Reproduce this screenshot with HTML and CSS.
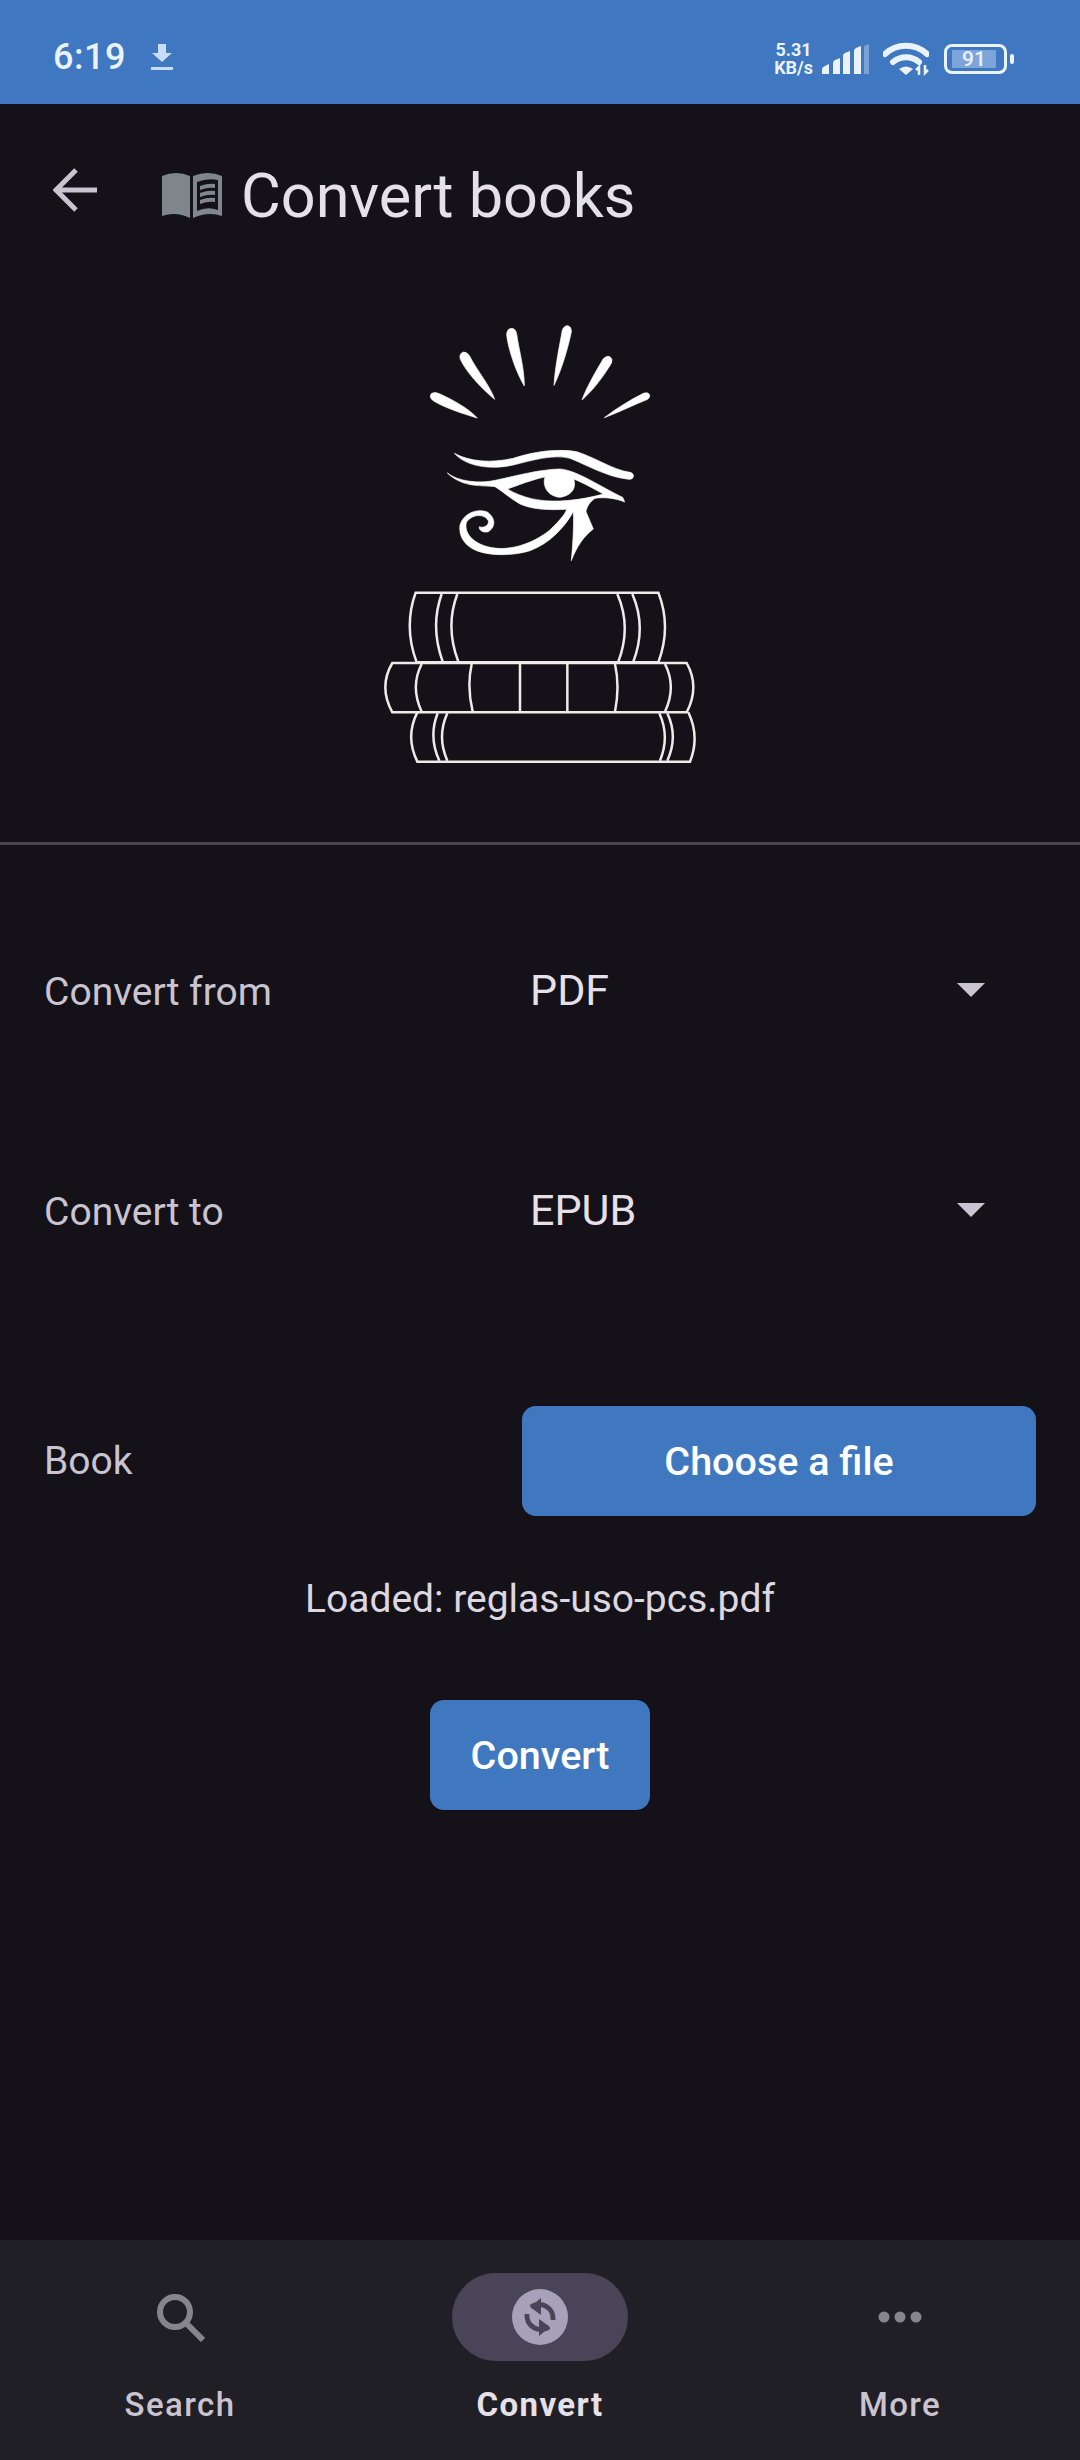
FILE: index.html
```html
<!DOCTYPE html>
<html lang="en">
<head>
    <meta charset="UTF-8">
    <meta name="viewport" content="width=device-width, initial-scale=1.0">
    <title>Convert books</title>
    <link rel="stylesheet" href="styles.css">
</head>
<body>
    <div class="app">
        <div class="status-bar">
            <div class="status-left">
                <span class="clock">6:19</span>
                <svg class="download" viewBox="0 0 22 26"><path d="M7 0h8v9h6L11 18 1 9h6zM0 23h22v3H0z"/></svg>
            </div>
            <div class="status-right">
                <span class="speed"><span>5.31</span><span>KB/s</span></span>
                <svg class="signal" viewBox="0 0 47 30">
                    <path d="M0 30v-4q0-3 3-4l4-2v10z"/>
                    <path d="M11 30V19q0-2 2-3l5-2v16z"/>
                    <path d="M21 30V12q0-2 2-3l5-2v23z"/>
                    <path d="M32 30V7q0-2 2-3l5-2v28z"/>
                    <path class="signal-off" d="M42 30V3q0-1 2-2l3-1v30z"/>
                </svg>
                <svg class="wifi" viewBox="0 0 46 34">
                    <path d="M2 12a31 31 0 0 1 42 0" />
                    <path d="M10 20a20 20 0 0 1 26 0" />
                    <path class="wifi-dot" d="M23 33l-7-6q7-5 14 0z"/>
                    <path class="wifi-arrows" d="M36 33v-8l-3 3M42 23v8l3-3"/>
                </svg>
                <div class="battery"><div class="battery-body"><span class="battery-fill">91</span></div><div class="battery-tip"></div></div>
            </div>
        </div>

        <div class="top-bar">
            <svg class="back" viewBox="0 0 44 44"><path d="M44 22H3M23 2L3 22l20 20"/></svg>
            <svg class="book" viewBox="0 0 60 46">
                <path d="M0 4Q14-2 28 4V46Q14 39 0 44z"/>
                <path fill-rule="evenodd" d="M31 4Q46-2 60 4V44Q46 39 31 46zM35 10V39Q45 34 56 38V8Q45 6 35 10z"/>
                <path d="M38 14q8-3 15-2v4q-7-1-15 2zM38 21q8-3 15-2v4q-7-1-15 2zM38 28q8-3 15-2v4q-7-1-15 2z"/>
            </svg>
            <h1>Convert books</h1>
        </div>

        <div class="logo-wrap">
            <svg class="logo" viewBox="0 0 1020 1410">
                <g class="eye" transform="translate(90 0)">
                    <path d="M232 324C190 312 120 288 97 270Q86 260 95 250Q105 245 118 251C160 270 205 295 232 324Z"/>
                    <path d="M284 268C250 240 200 190 181 148Q176 130 191 126Q202 126 210 140C230 180 272 230 284 268Z"/>
                    <path d="M373 228C350 190 325 120 320 75Q320 56 335 55Q347 56 350 72C355 110 374 180 373 228Z"/>
                    <path d="M462 226C465 170 480 100 487 60Q492 47 503 47Q515 50 514 66C505 110 485 180 462 226Z"/>
                    <path d="M546 270C560 230 590 180 610 146Q620 135 630 140Q640 148 634 160C610 200 580 240 546 270Z"/>
                    <path d="M613 323C650 295 690 270 730 250Q745 245 749 255Q750 266 738 270C700 285 650 310 613 323Z"/>
                    <path d="M163 430C210 455 270 460 340 445C400 425 470 415 530 425C580 440 640 480 690 487Q702 490 700 500Q698 510 680 507C620 500 560 465 510 445C460 432 400 450 340 465C270 480 200 470 163 430Z"/>
                    <path fill-rule="evenodd" d="M142 489C175 515 240 522 290 510C350 497 420 478 480 477C530 480 610 535 668 562L674 576C650 565 610 560 585 565C570 575 560 590 558 605L580 657C550 680 530 710 514 752C518 710 522 650 520 605C495 650 450 700 390 722C340 738 270 738 230 722C195 708 175 680 180 645C190 610 230 595 260 605C285 620 290 650 265 665C250 670 235 660 238 650C250 655 268 648 265 632C255 612 220 610 200 635C190 665 215 700 270 712C330 725 400 700 450 660C475 635 495 615 500 598C450 600 400 600 360 582C330 565 310 545 285 530C250 525 190 535 142 489ZM322 537C370 520 420 500 470 495C510 495 560 525 610 552C580 560 540 570 480 573C420 575 370 565 322 537Z"/>
                    <path d="M435 500C460 490 500 490 520 503C530 530 520 555 480 562C450 560 425 535 435 500Z"/>
                </g>
                <g class="books" transform="translate(0 780)">
                    <path d="M137 68H865Q905 170 865 277H140Q100 170 137 68Z"/>
                    <path d="M215 72Q180 170 218 275M262 72Q225 170 265 275M742 72Q785 170 745 275M787 72Q830 170 790 275"/>
                    <path d="M67 279H950Q990 350 950 427H67Q25 350 67 279Z"/>
                    <path d="M155 282Q120 350 155 425M305 282Q290 350 308 425M450 282V425M592 282V425M735 282Q750 350 735 425M885 282Q920 350 885 425"/>
                    <path d="M142 427Q105 500 142 575H960Q990 500 955 427"/>
                    <path d="M203 430Q175 500 208 572M232 430Q200 500 232 572M868 430Q900 500 870 572M892 430Q925 500 892 572"/>
                </g>
            </svg>
        </div>

        <div class="divider"></div>

        <div class="form">
            <div class="form-row">
                <span class="form-label">Convert from</span>
                <div class="picker"><span>PDF</span><span class="caret"></span></div>
            </div>
            <div class="form-row">
                <span class="form-label">Convert to</span>
                <div class="picker"><span>EPUB</span><span class="caret"></span></div>
            </div>
            <div class="form-row file-row">
                <span class="form-label">Book</span>
                <button class="btn btn-file">Choose a file</button>
            </div>
            <p class="loaded">Loaded: reglas-uso-pcs.pdf</p>
            <button class="btn btn-convert">Convert</button>
        </div>

        <nav class="bottom-nav">
            <div class="nav-item">
                <div class="nav-icon">
                    <svg viewBox="0 0 50 50" class="icon-search"><circle cx="20" cy="20" r="15"/><path d="M31 31l17 17"/></svg>
                </div>
                <span class="nav-label">Search</span>
            </div>
            <div class="nav-item active">
                <div class="nav-icon">
                    <svg viewBox="0 0 56 56" class="icon-convert">
                        <circle class="convert-disc" cx="28" cy="28" r="28"/>
                        <path class="convert-arrows" d="M19 18a14 14 0 0 1 22 13M37 38a14 14 0 0 1-22-13"/>
                        <path class="convert-heads" d="M29 9v17l-11-8zM27 47V30l11 8z"/>
                    </svg>
                </div>
                <span class="nav-label">Convert</span>
            </div>
            <div class="nav-item">
                <div class="nav-icon">
                    <svg viewBox="0 0 44 12" class="icon-more"><circle cx="6" cy="6" r="5.5"/><circle cx="22" cy="6" r="5.5"/><circle cx="38" cy="6" r="5.5"/></svg>
                </div>
                <span class="nav-label">More</span>
            </div>
        </nav>
    </div>
</body>
</html>
```

FILE: styles.css
```css
* {
    box-sizing: border-box;
}
body {
    margin: 0;
    background: #141218;
    font-family: Roboto, "Noto Sans", sans-serif;
    color: #e6e0e9;
}
.app {
    width: 1080px;
    height: 2460px;
    display: flex;
    flex-direction: column;
    overflow: hidden;
}

/* status bar */
.status-bar {
    height: 104px;
    flex: none;
    background: #3f78c0;
    padding: 32px 66px 0 53px;
    display: flex;
    justify-content: space-between;
    align-items: flex-start;
    color: #eaf2fc;
}
.status-left {
    display: flex;
    align-items: center;
    gap: 25px;
}
.clock {
    font-size: 36px;
    line-height: 50px;
    font-weight: 500;
    letter-spacing: 0.5px;
}
.download {
    width: 22px;
    height: 26px;
    fill: #c9dcf5;
}
.status-right {
    display: flex;
    align-items: center;
    height: 54px;
}
.speed {
    display: flex;
    flex-direction: column;
    align-items: center;
    font-size: 18px;
    line-height: 18px;
    font-weight: 700;
    margin-right: 9px;
}
.signal {
    width: 47px;
    height: 30px;
    fill: #eaf2fc;
    margin-right: 14px;
}
.signal-off {
    opacity: 0.35;
}
.wifi {
    width: 46px;
    height: 34px;
    fill: none;
    stroke: #eaf2fc;
    stroke-width: 6;
    stroke-linecap: round;
    margin-right: 15px;
}
.wifi-dot {
    fill: #eaf2fc;
    stroke: none;
}
.wifi-arrows {
    stroke-width: 2.5;
    stroke-linecap: butt;
}
.battery {
    display: flex;
    align-items: center;
    gap: 3px;
}
.battery-body {
    width: 63px;
    height: 30px;
    border: 3px solid #eaf2fc;
    border-radius: 8px;
    padding: 3px 8px 3px 5px;
}
.battery-fill {
    display: block;
    height: 18px;
    background: #7ea5d9;
    border-radius: 1px;
    font-size: 21px;
    line-height: 19px;
    text-align: center;
    font-weight: 500;
}
.battery-tip {
    width: 4px;
    height: 10px;
    background: #eaf2fc;
    border-radius: 2px;
}

/* header */
.top-bar {
    height: 172px;
    flex: none;
    display: flex;
    align-items: flex-start;
    padding: 64px 0 0 53px;
}
.back {
    width: 44px;
    height: 44px;
    fill: none;
    stroke: #cac4d0;
    stroke-width: 5;
    margin-right: 65px;
}
.book {
    width: 60px;
    height: 46px;
    fill: #7f868c;
    margin: 4px 19px 0 0;
}
.top-bar h1 {
    margin: -12px 0 0;
    font-size: 61.2px;
    line-height: 80px;
    font-weight: 400;
}

/* logo */
.logo-wrap {
    flex: none;
    padding-top: 34px;
    display: flex;
    justify-content: center;
}
.logo {
    width: 340px;
    height: 470px;
}
.eye {
    fill: #fff;
    stroke: #fff;
    stroke-width: 2;
}
.books {
    fill: none;
    stroke: #ececec;
    stroke-width: 7.5;
}
.divider {
    flex: none;
    height: 3px;
    margin-top: 62px;
    background: #48464e;
}

/* form */
.form {
    flex: 1;
    display: flex;
    flex-direction: column;
    align-items: center;
    padding: 92px 44px 0;
}
.form-row {
    width: 100%;
    height: 110px;
    margin-bottom: 110px;
    display: flex;
    align-items: center;
}
.form-row:nth-child(2) {
    margin-bottom: 139px;
}
.file-row {
    margin-bottom: 0;
}
.form-label {
    width: 478px;
    flex: none;
    font-size: 39px;
    line-height: 50px;
    color: #cac4d0;
}
.picker {
    flex: 1;
    display: flex;
    justify-content: space-between;
    align-items: center;
    padding: 0 51px 0 8px;
    font-size: 43px;
    line-height: 56px;
    margin-top: -5px;
}
.caret {
    width: 0;
    height: 0;
    border-left: 14px solid transparent;
    border-right: 14px solid transparent;
    border-top: 14px solid #c9c4d0;
}
.btn {
    display: block;
    height: 110px;
    border: none;
    border-radius: 14px;
    background: #4078c0;
    color: #fff;
    font-family: inherit;
    font-size: 39.5px;
    font-weight: 500;
}
.btn-file {
    width: 514px;
    padding: 0;
}
.loaded {
    margin: 58px 0 0;
    font-size: 39px;
    line-height: 50px;
    color: #dcd7e0;
}
.btn-convert {
    width: 220px;
    margin-top: 76px;
}

/* bottom nav */
.bottom-nav {
    flex: none;
    height: 220px;
    background: #211f26;
    display: grid;
    grid-template-columns: repeat(3, 360px);
    padding-top: 33px;
}
.nav-item {
    display: flex;
    flex-direction: column;
    align-items: center;
}
.nav-icon {
    width: 176px;
    height: 88px;
    border-radius: 44px;
    display: flex;
    align-items: center;
    justify-content: center;
}
.active .nav-icon {
    background: #4a4458;
}
.nav-label {
    margin-top: 22px;
    font-size: 33px;
    line-height: 44px;
    font-weight: 500;
    letter-spacing: 1.4px;
    color: #cac4d0;
}
.active .nav-label {
    color: #e6e0e9;
    font-weight: 700;
}
.icon-search {
    width: 50px;
    height: 50px;
    fill: none;
    stroke: #87858c;
    stroke-width: 6;
}
.icon-convert {
    width: 56px;
    height: 56px;
}
.convert-disc {
    fill: #a9a0b9;
}
.convert-arrows {
    fill: none;
    stroke: #4a4458;
    stroke-width: 5;
}
.convert-heads {
    fill: #4a4458;
}
.icon-more {
    width: 44px;
    height: 12px;
    fill: #87858c;
}
```
